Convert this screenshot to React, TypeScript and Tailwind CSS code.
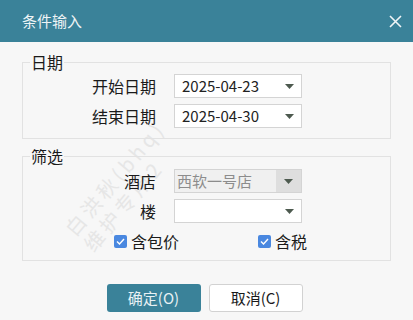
import React from "react";

const cjk = "font-['Noto_Sans_CJK_SC','Noto_Sans',sans-serif]";

function Arrow() {
  return (
    <svg width="9" height="5" viewBox="0 0 9 5" className="shrink-0">
      <path d="M0 0 H9 L4.5 5 Z" fill="#4d5a4f" />
    </svg>
  );
}

function Select({ value, disabled }: { value: string; disabled?: boolean }) {
  if (disabled) {
    return (
      <div className="flex h-[24px] w-[128px] border border-[#d4d4d4] bg-[#f0f0f0]">
        <div className="flex-1 pl-[2px] text-[15px] leading-[22px] text-[#8c8c8c]">{value}</div>
        <div className="flex w-[25px] items-center justify-center bg-[#dedede]">
          <Arrow />
        </div>
      </div>
    );
  }
  return (
    <div className="flex h-[24px] w-[128px] items-center border border-[#d4d4d4] bg-white pr-[7px]">
      <div className="flex-1 pl-[7px] text-[15px] leading-[22px] text-[#222]">{value}</div>
      <Arrow />
    </div>
  );
}

function Row({ label, children }: { label: string; children: React.ReactNode }) {
  return (
    <div className="flex items-center gap-[18px]">
      <div className="w-[133px] text-right text-[16px] leading-[20px] text-[#1a1a1a]">{label}</div>
      {children}
    </div>
  );
}

function Check({ label }: { label: string }) {
  return (
    <div className="flex items-center gap-[4px]">
      <div className="flex h-[13px] w-[13px] items-center justify-center rounded-[2px] bg-[#4a88e0]">
        <svg width="9" height="7" viewBox="0 0 9 7">
          <path d="M1 3.5 L3.5 6 L8 1" fill="none" stroke="white" strokeWidth="1.4" />
        </svg>
      </div>
      <span className="text-[16px] leading-[20px] text-[#1a1a1a]">{label}</span>
    </div>
  );
}

export default function App() {
  return (
    <div className={`relative h-[320px] w-[413px] overflow-hidden bg-[#f7f7f7] ${cjk}`}>
      <div className="flex h-[42px] items-center justify-between bg-[#3a8299] pl-[22px] pr-[10px]">
        <span className="text-[15px] text-[#eef4f6]">条件输入</span>
        <svg width="13" height="13" viewBox="0 0 13 13" className="mr-[1px]">
          <path d="M1 1 L12 12 M12 1 L1 12" stroke="#f0f5f7" strokeWidth="1.6" />
        </svg>
      </div>

      {/* watermark sits under the form */}
      <div className="pointer-events-none absolute left-[60px] top-[225px] origin-top-left -rotate-[50deg] whitespace-nowrap text-[20px] leading-[24px] tracking-[4px] text-[#e6e6e6]">
        <div>白洪秋(bhq)</div>
        <div>维护专用2</div>
      </div>

      <div className="relative px-[22px]">
        <fieldset className="mt-[11px] border border-[#e2e2e2] pb-[10px] pt-[3px]">
          <legend className="ml-[7px] px-[1px] text-[16px] leading-[18px] text-[#1a1a1a]">日期</legend>
          <div className="flex flex-col gap-[6px]">
            <Row label="开始日期">
              <Select value="2025-04-23" />
            </Row>
            <Row label="结束日期">
              <Select value="2025-04-30" />
            </Row>
          </div>
        </fieldset>

        <fieldset className="mt-[8px] border border-[#e2e2e2] pb-[9px] pt-[4px]">
          <legend className="ml-[7px] px-[1px] text-[16px] leading-[18px] text-[#1a1a1a]">筛选</legend>
          <div className="flex flex-col gap-[6px]">
            <Row label="酒店">
              <Select value="西软一号店" disabled />
            </Row>
            <Row label="楼">
              <Select value="" />
            </Row>
            <div className="mt-[2px] flex h-[20px] items-center pl-[91px]">
              <div className="w-[144px]">
                <Check label="含包价" />
              </div>
              <Check label="含税" />
            </div>
          </div>
        </fieldset>

        <div className="mt-[23px] flex justify-center gap-[8px] pr-[4px]">
          <button className="h-[28px] w-[94px] rounded-[3px] bg-[#3a8299] text-[15px] text-[#e8f1f4]">
            确定(O)
          </button>
          <button className="h-[28px] w-[94px] rounded-[3px] border border-[#d2d2d2] bg-white text-[15px] text-[#1a1a1a]">
            取消(C)
          </button>
        </div>
      </div>
    </div>
  );
}
